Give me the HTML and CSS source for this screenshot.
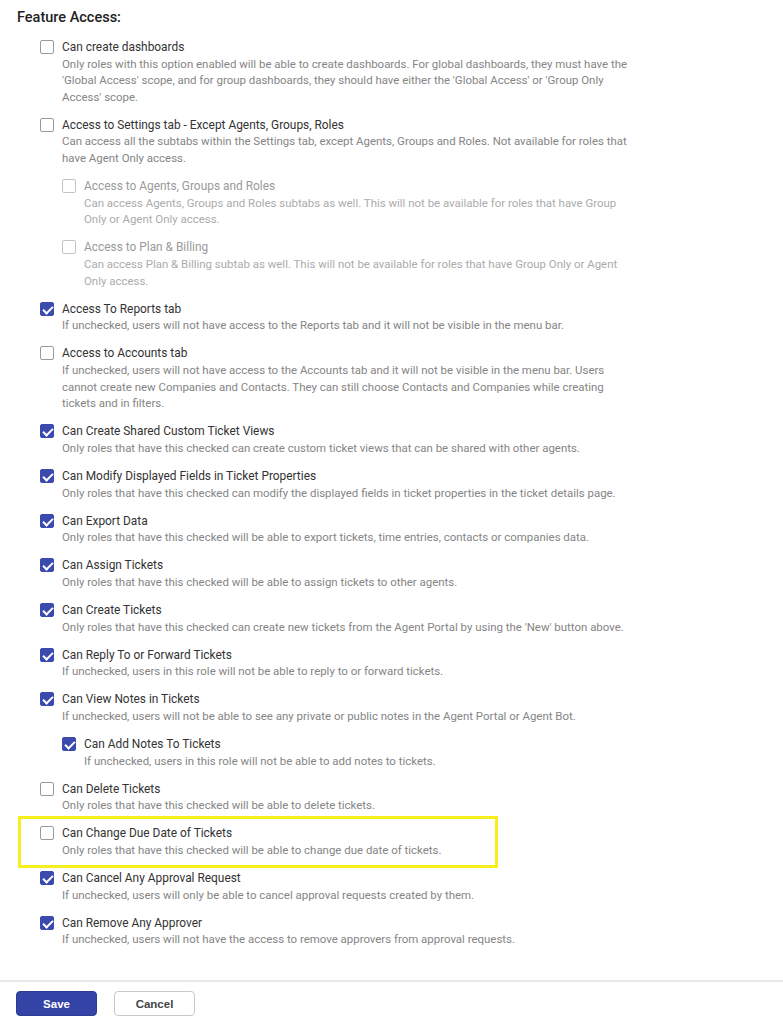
FILE: index.html
```html
<!DOCTYPE html>
<html>
<head>
<meta charset="utf-8">
<link rel="stylesheet" href="styles.css">
</head>
<body>
<div class="page">
  <h2 class="title">Feature Access:</h2>
  <ul class="list">
    <li class="item">
      <span class="cb"></span>
      <div class="txt"><div class="label">Can create dashboards</div><div class="desc">Only roles with this option enabled will be able to create dashboards. For global dashboards, they must have the 'Global Access' scope, and for group dashboards, they should have either the 'Global Access' or 'Group Only Access' scope.</div></div>
    </li>
    <li class="item">
      <span class="cb"></span>
      <div class="txt"><div class="label">Access to Settings tab - Except Agents, Groups, Roles</div><div class="desc">Can access all the subtabs within the Settings tab, except Agents, Groups and Roles. Not available for roles that have Agent Only access.</div></div>
    </li>
    <li class="item sub disabled">
      <span class="cb"></span>
      <div class="txt"><div class="label">Access to Agents, Groups and Roles</div><div class="desc">Can access Agents, Groups and Roles subtabs as well. This will not be available for roles that have Group Only or Agent Only access.</div></div>
    </li>
    <li class="item sub disabled">
      <span class="cb"></span>
      <div class="txt"><div class="label">Access to Plan &amp; Billing</div><div class="desc">Can access Plan &amp; Billing subtab as well. This will not be available for roles that have Group Only or Agent Only access.</div></div>
    </li>
    <li class="item">
      <span class="cb on"></span>
      <div class="txt"><div class="label">Access To Reports tab</div><div class="desc">If unchecked, users will not have access to the Reports tab and it will not be visible in the menu bar.</div></div>
    </li>
    <li class="item">
      <span class="cb"></span>
      <div class="txt"><div class="label">Access to Accounts tab</div><div class="desc">If unchecked, users will not have access to the Accounts tab and it will not be visible in the menu bar. Users cannot create new Companies and Contacts. They can still choose Contacts and Companies while creating tickets and in filters.</div></div>
    </li>
    <li class="item">
      <span class="cb on"></span>
      <div class="txt"><div class="label">Can Create Shared Custom Ticket Views</div><div class="desc">Only roles that have this checked can create custom ticket views that can be shared with other agents.</div></div>
    </li>
    <li class="item">
      <span class="cb on"></span>
      <div class="txt"><div class="label">Can Modify Displayed Fields in Ticket Properties</div><div class="desc">Only roles that have this checked can modify the displayed fields in ticket properties in the ticket details page.</div></div>
    </li>
    <li class="item">
      <span class="cb on"></span>
      <div class="txt"><div class="label">Can Export Data</div><div class="desc">Only roles that have this checked will be able to export tickets, time entries, contacts or companies data.</div></div>
    </li>
    <li class="item">
      <span class="cb on"></span>
      <div class="txt"><div class="label">Can Assign Tickets</div><div class="desc">Only roles that have this checked will be able to assign tickets to other agents.</div></div>
    </li>
    <li class="item">
      <span class="cb on"></span>
      <div class="txt"><div class="label">Can Create Tickets</div><div class="desc">Only roles that have this checked can create new tickets from the Agent Portal by using the 'New' button above.</div></div>
    </li>
    <li class="item">
      <span class="cb on"></span>
      <div class="txt"><div class="label">Can Reply To or Forward Tickets</div><div class="desc">If unchecked, users in this role will not be able to reply to or forward tickets.</div></div>
    </li>
    <li class="item">
      <span class="cb on"></span>
      <div class="txt"><div class="label">Can View Notes in Tickets</div><div class="desc">If unchecked, users will not be able to see any private or public notes in the Agent Portal or Agent Bot.</div></div>
    </li>
    <li class="item sub">
      <span class="cb on"></span>
      <div class="txt"><div class="label">Can Add Notes To Tickets</div><div class="desc">If unchecked, users in this role will not be able to add notes to tickets.</div></div>
    </li>
    <li class="item">
      <span class="cb"></span>
      <div class="txt"><div class="label">Can Delete Tickets</div><div class="desc">Only roles that have this checked will be able to delete tickets.</div></div>
    </li>
    <li class="item highlight">
      <span class="cb"></span>
      <div class="txt"><div class="label">Can Change Due Date of Tickets</div><div class="desc">Only roles that have this checked will be able to change due date of tickets.</div></div>
    </li>
    <li class="item">
      <span class="cb on"></span>
      <div class="txt"><div class="label">Can Cancel Any Approval Request</div><div class="desc">If unchecked, users will only be able to cancel approval requests created by them.</div></div>
    </li>
    <li class="item">
      <span class="cb on"></span>
      <div class="txt"><div class="label">Can Remove Any Approver</div><div class="desc">If unchecked, users will not have the access to remove approvers from approval requests.</div></div>
    </li>
  </ul>
  <div class="footer">
    <button class="btn save">Save</button>
    <button class="btn cancel">Cancel</button>
  </div>
</div>
</body>
</html>
```
FILE: styles.css
```css
html, body {
  margin: 0;
  padding: 0;
  background: #fff;
}
body {
  font-family: Roboto, "Liberation Sans", Arial, sans-serif;
  color: #333;
}
.page {
  width: 783px;
}
.title {
  margin: 0;
  padding: 8px 0 0 17px;
  font-size: 14.5px;
  line-height: 20px;
  font-weight: 500;
  color: #222;
}
.list {
  list-style: none;
  margin: 11px 0 0 0;
  padding: 0 0 0 40px;
  width: 594px;
  display: flex;
  flex-direction: column;
  gap: 11.5px;
}
.item {
  display: flex;
  gap: 8px;
  align-items: flex-start;
  position: relative;
}
.item.sub {
  padding-left: 22px;
}
.cb {
  flex: none;
  width: 14px;
  height: 14px;
  box-sizing: border-box;
  border: 1px solid #9a9a9a;
  border-radius: 2px;
  margin-top: 1px;
  background: #fff;
}
.cb.on {
  background: #3a4aad;
  border-color: #3a4aad;
  position: relative;
}
.cb.on::after {
  content: "";
  position: absolute;
  left: 4px;
  top: 1px;
  width: 4px;
  height: 8px;
  border: solid #fff;
  border-width: 0 2px 2px 0;
  transform: rotate(45deg);
}
.txt {
  flex: 1;
  min-width: 0;
}
.label {
  font-size: 11.9px;
  line-height: 16.6px;
  color: #333;
}
.desc {
  font-size: 11.45px;
  line-height: 16.6px;
  color: #858585;
}
.disabled .cb {
  border-color: #c4c4c4;
}
.disabled .label {
  color: #9a9a9a;
}
.disabled .desc {
  color: #ababab;
}
.highlight::before {
  content: "";
  position: absolute;
  left: -22px;
  top: -9px;
  width: 480px;
  height: 52px;
  box-sizing: border-box;
  border: 3px solid #f7ef1c;
  pointer-events: none;
}
.footer {
  margin-top: 32px;
  border-top: 2px solid #e9e9e9;
  padding: 9px 0 0 16px;
  display: flex;
  gap: 17px;
}
.btn {
  width: 81px;
  height: 25px;
  border-radius: 4px;
  font-family: "Liberation Sans", Arial, sans-serif;
  font-size: 11.5px;
  font-weight: bold;
  cursor: pointer;
}
.save {
  background: #3444a6;
  border: 1px solid #2b3a94;
  color: #fff;
}
.cancel {
  background: #fff;
  border: 1px solid #c8c8c8;
  color: #444;
}
```
